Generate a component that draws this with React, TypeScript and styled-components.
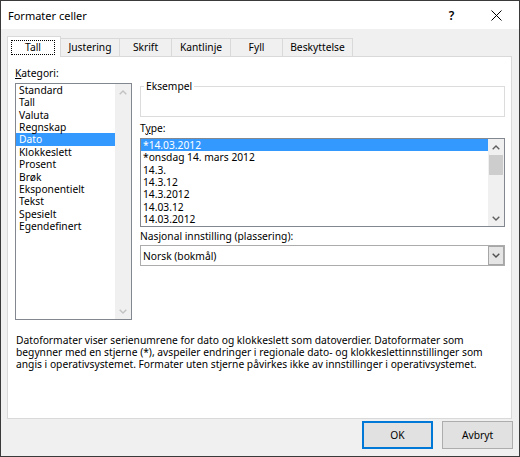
import React from "react";
import styled, { createGlobalStyle } from "styled-components";

const GlobalStyle = createGlobalStyle`
  html, body {
    margin: 0;
    padding: 0;
    background: #f0f0f0;
  }
  * {
    box-sizing: border-box;
  }
`;

const categories = [
	"Standard", "Tall", "Valuta", "Regnskap", "Dato", "Klokkeslett",
	"Prosent", "Brøk", "Eksponentielt", "Tekst", "Spesielt", "Egendefinert",
];

const types = [
	"*14.03.2012", "*onsdag 14. mars 2012", "14.3.", "14.3.12",
	"14.3.2012", "14.03.12", "14.03.2012",
];

const tabs = [
	{ label: "Tall", width: 54 },
	{ label: "Justering", width: 60 },
	{ label: "Skrift", width: 53 },
	{ label: "Kantlinje", width: 60 },
	{ label: "Fyll", width: 53 },
	{ label: "Beskyttelse", width: 71 },
];

const Window = styled.div`
  width: 520px;
  height: 457px;
  border: 1px solid #3a3a3a;
  background: #f0f0f0;
  display: flex;
  flex-direction: column;
  font-family: "Noto Sans", sans-serif;
  font-size: 10.25px;
  color: #000;
  overflow: hidden;
`;

const TitleBar = styled.div`
  height: 28px;
  flex: none;
  background: #fff;
  display: flex;
  align-items: center;
  padding-left: 7px;
`;

const Title = styled.div`
  flex: 1;
  font-size: 11px;
  padding-top: 1px;
`;

const CaptionButton = styled.div`
  width: 45px;
  height: 28px;
  display: flex;
  align-items: center;
  justify-content: center;
  font-size: 12px;
  font-weight: 600;
`;

const TabStrip = styled.div`
  height: 27px;
  flex: none;
  display: flex;
  align-items: flex-end;
  padding-left: 6px;
`;

const Tab = styled.div<{ $active?: boolean; $width: number }>`
  position: relative;
  width: ${(p) => p.$width}px;
  height: ${(p) => (p.$active ? 21 : 18)}px;
  margin-right: -1px;
  margin-bottom: ${(p) => (p.$active ? -1 : 0)}px;
  z-index: ${(p) => (p.$active ? 2 : 1)};
  border: 1px solid #d9d9d9;
  border-bottom: none;
  background: ${(p) => (p.$active ? "#fff" : "#f0f0f0")};
  display: flex;
  justify-content: ${(p) => (p.$active ? "flex-start" : "center")};
  align-items: flex-start;
  padding: ${(p) => (p.$active ? "3px 0 0 3px" : "2px 0 0 0")};
  line-height: 13px;
`;

const FocusRing = styled.span`
  width: 44px;
  height: 15px;
  border: 1px dotted #000;
  display: flex;
  align-items: center;
  justify-content: center;
`;

const Panel = styled.div`
  height: 363px;
  flex: none;
  margin: 0 7px 0 6px;
  background: #fff;
  border: 1px solid #d9d9d9;
  display: flex;
  flex-direction: column;
  padding: 10px 6px 0 7px;
`;

const TopRow = styled.div`
  display: flex;
  gap: 8px;
`;

const LeftColumn = styled.div`
  width: 117px;
  display: flex;
  flex-direction: column;
`;

const RightColumn = styled.div`
  width: 365px;
  display: flex;
  flex-direction: column;
  padding-top: 13px;
`;

const Label = styled.div<{ $top?: number; $bottom?: number }>`
  line-height: 13px;
  margin-top: ${(p) => p.$top ?? 0}px;
  margin-bottom: ${(p) => p.$bottom ?? 3}px;
  white-space: nowrap;

  u {
    text-decoration-thickness: 1px;
    text-underline-offset: 1px;
  }
`;

const GroupBox = styled.fieldset`
  height: 37px;
  margin: 0;
  padding: 0 0 0 3px;
  border: 1px solid #dcdcdc;
  min-inline-size: 0;

  legend {
    padding: 0 2px;
    line-height: 13px;
  }
`;

const ListBox = styled.div<{ $height: number }>`
  height: ${(p) => p.$height}px;
  border: 1px solid #828790;
  background: #fff;
  display: flex;
`;

const ListItems = styled.div`
  flex: 1;
  overflow: hidden;
`;

const ListItem = styled.div<{ $selected?: boolean; $indent: number }>`
  height: 12.36px;
  line-height: 12.36px;
  padding-left: ${(p) => p.$indent}px;
  white-space: nowrap;
  background: ${(p) => (p.$selected ? "#3399ff" : "transparent")};
  color: ${(p) => (p.$selected ? "#fff" : "#000")};
`;

const ScrollBar = styled.div`
  width: 16px;
  flex: none;
  background: #f0f0f0;
  display: flex;
  flex-direction: column;
`;

const ArrowButton = styled.div<{ $disabled?: boolean }>`
  height: 16px;
  flex: none;
  display: flex;
  align-items: center;
  justify-content: center;
  color: ${(p) => (p.$disabled ? "#c2c2c2" : "#606060")};
`;

const Track = styled.div`
  flex: 1;
  display: flex;
  flex-direction: column;
`;

const Thumb = styled.div`
  margin-top: 0;
  height: 20px;
  margin-left: 1px;
  margin-right: 1px;
  background: #cdcdcd;
`;

const Select = styled.div`
  height: 21px;
  border: 1px solid #acacac;
  background: #fff;
  display: flex;
  align-items: stretch;
`;

const SelectValue = styled.div`
  flex: 1;
  display: flex;
  align-items: center;
  padding-left: 2px;
`;

const DropButton = styled.div`
  width: 16px;
  background: #e5e5e5;
  border: 1px solid #a6a6a6;
  margin: 0;
  display: flex;
  align-items: center;
  justify-content: center;
  color: #505050;
`;

const Description = styled.p`
  margin: 14px 0 0 1px;
  line-height: 12px;
  white-space: nowrap;
`;

const Footer = styled.div`
  flex: none;
  display: flex;
  justify-content: flex-end;
  gap: 9px;
  padding: 2px 6px 0 0;
`;

const Button = styled.div<{ $default?: boolean }>`
  width: 71px;
  height: 28px;
  background: #e1e1e1;
  border: 1px solid ${(p) => (p.$default ? "#0078d7" : "#adadad")};
  box-shadow: ${(p) => (p.$default ? "inset 0 0 0 1px #0078d7" : "none")};
  display: flex;
  align-items: center;
  justify-content: center;
`;

const Chevron = ({ up }: { up?: boolean }) => (
	<svg width="8" height="5" viewBox="0 0 8 5">
		<polyline
			points={up ? "0.7,4.3 4,1 7.3,4.3" : "0.7,0.7 4,4 7.3,0.7"}
			fill="none"
			stroke="currentColor"
			strokeWidth="1.4"
		/>
	</svg>
);

const App = () => {
	return (
		<>
			<GlobalStyle />
			<Window>
				<TitleBar>
					<Title>Formater celler</Title>
					<CaptionButton>?</CaptionButton>
					<CaptionButton>
						<svg width="11" height="11" viewBox="0 0 11 11">
							<path d="M0.5 0.5 L10.5 10.5 M10.5 0.5 L0.5 10.5" stroke="#000" strokeWidth="1" />
						</svg>
					</CaptionButton>
				</TitleBar>

				<TabStrip>
					{tabs.map((t, i) => (
						<Tab key={t.label} $active={i === 0} $width={t.width}>
							{i === 0 ? <FocusRing>{t.label}</FocusRing> : t.label}
						</Tab>
					))}
				</TabStrip>

				<Panel>
					<TopRow>
						<LeftColumn>
							<Label><u>K</u>ategori:</Label>
							<ListBox $height={237}>
								<ListItems>
									{categories.map((c) => (
										<ListItem key={c} $indent={3} $selected={c === "Dato"}>{c}</ListItem>
									))}
								</ListItems>
								<ScrollBar>
									<ArrowButton $disabled><Chevron up /></ArrowButton>
									<Track />
									<ArrowButton $disabled><Chevron /></ArrowButton>
								</ScrollBar>
							</ListBox>
						</LeftColumn>

						<RightColumn>
							<GroupBox>
								<legend>Eksempel</legend>
							</GroupBox>

							<Label $top={5}>T<u>y</u>pe:</Label>
							<ListBox $height={89}>
								<ListItems>
									{types.map((t, i) => (
										<ListItem key={t} $indent={2} $selected={i === 0}>{t}</ListItem>
									))}
								</ListItems>
								<ScrollBar>
									<ArrowButton><Chevron up /></ArrowButton>
									<Track>
										<Thumb />
									</Track>
									<ArrowButton><Chevron /></ArrowButton>
								</ScrollBar>
							</ListBox>

							<Label $top={3} $bottom={2}>Nasjonal innstilling (plassering):</Label>
							<Select>
								<SelectValue>Norsk (bokmål)</SelectValue>
								<DropButton><Chevron /></DropButton>
							</Select>
						</RightColumn>
					</TopRow>

					<Description>
						Datoformater viser serienumrene for dato og klokkeslett som datoverdier. Datoformater som<br />
						begynner med en stjerne (*), avspeiler endringer i regionale dato- og klokkeslettinnstillinger som<br />
						angis i operativsystemet. Formater uten stjerne påvirkes ikke av innstillinger i operativsystemet.
					</Description>
				</Panel>

				<Footer>
					<Button $default>OK</Button>
					<Button>Avbryt</Button>
				</Footer>
			</Window>
		</>
	);
};

export default App;
